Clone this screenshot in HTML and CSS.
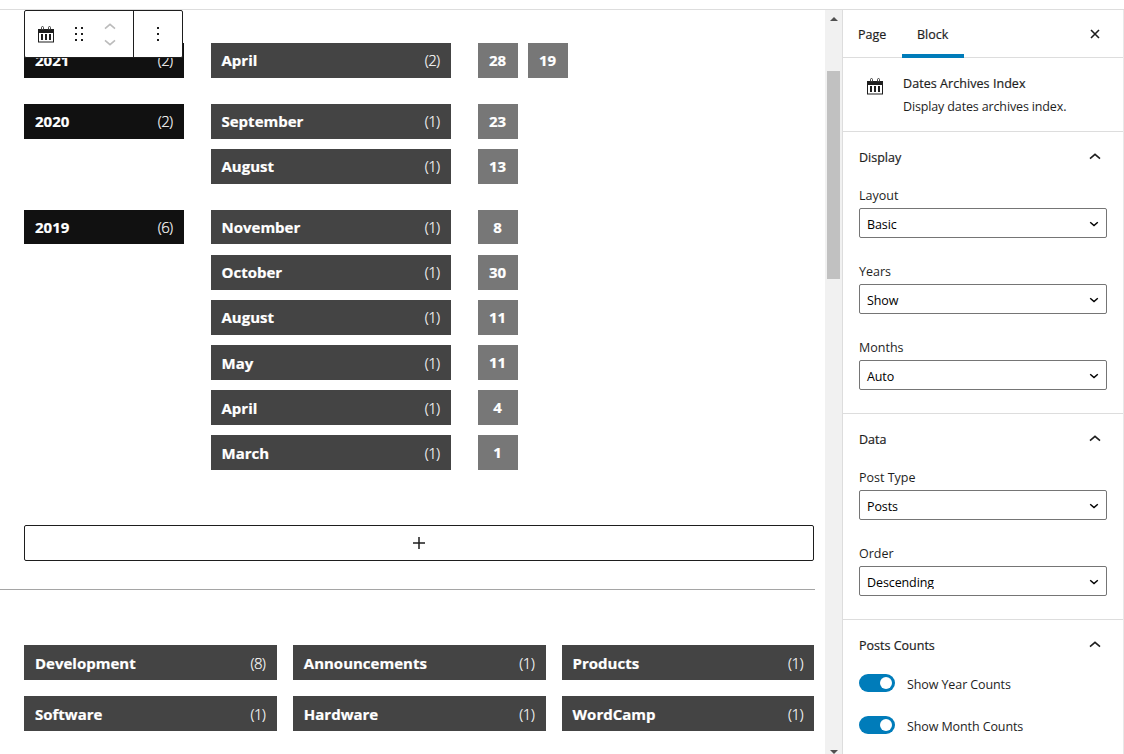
FILE: index.html
```html
<!DOCTYPE html>
<html lang="en">
<head>
<meta charset="utf-8">
<title>Block editor</title>
<link rel="stylesheet" href="styles.css">
</head>
<body>
<svg width="0" height="0" class="defs">
  <symbol id="cal" viewBox="0 0 16 17"><path d="M0 3h16v13.500H0zM1 7V15.500h14V7z" fill-rule="evenodd"/><path d="M3 8h2v6H3zM7 8h2v6H7zM11 8h2v6h-2z"/><path d="M3.500 3.500V1.500a1 1 0 0 1 2 0V3.500zM10.500 3.500V1.500a1 1 0 0 1 2 0V3.500z" fill="#fff" stroke="currentColor" stroke-width=".8"/></symbol>
  <symbol id="up" viewBox="0 0 12 7"><path d="M1 5.600 6 1.300l5 4.300" fill="none" stroke="currentColor" stroke-width="1.600"/></symbol>
  <symbol id="down" viewBox="0 0 10 6"><path d="M1.200 1.300l3.800 3.200 3.800-3.200" fill="none" stroke="currentColor" stroke-width="1.500"/></symbol>
</svg>
<div class="app">
  <main class="editor">
    <div class="toolbar">
      <div class="tools">
        <svg class="cal" width="16" height="17"><use href="#cal"/></svg>
        <svg class="drag" width="8" height="14"><path d="M0 0h2v2H0zM6 0h2v2H6zM0 6h2v2H0zM6 6h2v2H6zM0 12h2v2H0zM6 12h2v2H6z"/></svg>
        <span class="movers"><svg width="12" height="7"><use href="#up"/></svg><svg class="flip" width="12" height="7"><use href="#up"/></svg></span>
      </div>
      <div class="more"><svg width="2" height="14"><path d="M0 0h2v2H0zM0 6h2v2H0zM0 12h2v2H0z"/></svg></div>
    </div>
    <section class="archive">
      <div class="group">
        <div class="bar year"><b>2021</b><i>(2)</i></div>
        <div class="months">
          <div class="row"><div class="bar month"><b>April</b><i>(2)</i></div><span class="day">28</span><span class="day">19</span></div>
        </div>
      </div>
      <div class="group">
        <div class="bar year"><b>2020</b><i>(2)</i></div>
        <div class="months">
          <div class="row"><div class="bar month"><b>September</b><i>(1)</i></div><span class="day">23</span></div>
          <div class="row"><div class="bar month"><b>August</b><i>(1)</i></div><span class="day">13</span></div>
        </div>
      </div>
      <div class="group">
        <div class="bar year"><b>2019</b><i>(6)</i></div>
        <div class="months">
          <div class="row"><div class="bar month"><b>November</b><i>(1)</i></div><span class="day">8</span></div>
          <div class="row"><div class="bar month"><b>October</b><i>(1)</i></div><span class="day">30</span></div>
          <div class="row"><div class="bar month"><b>August</b><i>(1)</i></div><span class="day">11</span></div>
          <div class="row"><div class="bar month"><b>May</b><i>(1)</i></div><span class="day">11</span></div>
          <div class="row"><div class="bar month"><b>April</b><i>(1)</i></div><span class="day">4</span></div>
          <div class="row"><div class="bar month"><b>March</b><i>(1)</i></div><span class="day">1</span></div>
        </div>
      </div>
    </section>
    <div class="appender"><svg width="12" height="12"><path d="M6 0v12M0 6h12" stroke="#1e1e1e" stroke-width="1.500"/></svg></div>
    <div class="rule"></div>
    <section class="terms">
      <div class="bar"><b>Development</b><i>(8)</i></div>
      <div class="bar"><b>Announcements</b><i>(1)</i></div>
      <div class="bar"><b>Products</b><i>(1)</i></div>
      <div class="bar"><b>Software</b><i>(1)</i></div>
      <div class="bar"><b>Hardware</b><i>(1)</i></div>
      <div class="bar"><b>WordCamp</b><i>(1)</i></div>
    </section>
  </main>
  <div class="scrollbar">
    <svg width="8" height="4"><path d="M0 4l4-4 4 4z"/></svg>
    <div class="thumb"></div>
    <svg width="8" height="4"><path d="M0 0l4 4 4-4z"/></svg>
  </div>
  <aside class="sidebar">
    <div class="tabs">
      <span class="tab">Page</span><span class="tab active">Block</span>
      <svg class="close" width="10" height="10"><path d="M1 1l8 8M9 1L1 9" stroke="#1e1e1e" stroke-width="1.600"/></svg>
    </div>
    <div class="card">
      <svg width="16" height="17"><use href="#cal"/></svg>
      <div><h2>Dates Archives Index</h2><p>Display dates archives index.</p></div>
    </div>
    <section class="panel">
      <h3><span>Display</span><svg width="12" height="7"><use href="#up"/></svg></h3>
      <div class="field"><label>Layout</label><div class="select"><span>Basic</span><svg width="10" height="6"><use href="#down"/></svg></div></div>
      <div class="field"><label>Years</label><div class="select"><span>Show</span><svg width="10" height="6"><use href="#down"/></svg></div></div>
      <div class="field"><label>Months</label><div class="select"><span>Auto</span><svg width="10" height="6"><use href="#down"/></svg></div></div>
    </section>
    <section class="panel">
      <h3><span>Data</span><svg width="12" height="7"><use href="#up"/></svg></h3>
      <div class="field"><label>Post Type</label><div class="select"><span>Posts</span><svg width="10" height="6"><use href="#down"/></svg></div></div>
      <div class="field"><label>Order</label><div class="select"><span class="clipped">Descending</span><svg width="10" height="6"><use href="#down"/></svg></div></div>
    </section>
    <section class="panel last">
      <h3><span>Posts Counts</span><svg width="12" height="7"><use href="#up"/></svg></h3>
      <div class="toggle"><span class="switch"></span><span>Show Year Counts</span></div>
      <div class="toggle"><span class="switch"></span><span>Show Month Counts</span></div>
    </section>
  </aside>
</div>
</body>
</html>
```
FILE: styles.css
```css
* { box-sizing: border-box; }
body { margin: 0; padding-top: 9px; height: 754px; overflow: hidden; background: #fff; color: #1e1e1e; font: 12.5px/20px "Open Sans", "Noto Sans", sans-serif; }
svg { display: block; flex: none; fill: currentColor; }
.defs { position: absolute; }
.app { display: flex; height: 745px; border-top: 1px solid #ddd; }
.editor { position: relative; width: 825px; padding-top: 33px; flex: none; }
.toolbar { position: absolute; left: 24px; top: 0; width: 159px; height: 48px; display: flex; background: #fff; border: 1px solid #1e1e1e; border-radius: 2px; z-index: 1; }
.tools { width: 109px; display: flex; align-items: center; padding-left: 13px; border-right: 1px solid #1e1e1e; }
.drag { margin-left: 21px; }
.movers { display: grid; gap: 9px; margin-left: 21px; color: #bbb; }
.flip { transform: scaleY(-1); }
.more { flex: 1; display: flex; align-items: center; justify-content: center; }
.archive { display: grid; gap: 26.15px; padding-left: 24px; }
.group { display: flex; align-items: flex-start; gap: 27px; }
.months { display: grid; gap: 10.45px; }
.row { display: flex; gap: 10px; }
.bar { display: flex; align-items: center; justify-content: space-between; height: 34.7px; padding: 0 11.500px 0 11px; background: #444; color: #fff; font-size: 15px; }
.bar b { font-weight: 700; -webkit-text-stroke: .2px #fff; }
.month b { margin-left: -.5px; }
.bar i { font-style: normal; font-weight: 300; letter-spacing: -.65px; -webkit-text-stroke: .15px #fff; }
.year { width: 160px; background: #111; }
.month { width: 240px; margin-right: 17px; }
.day { width: 40px; height: 34.7px; background: #777; color: #fff; font: 700 15px/34.7px "Open Sans", sans-serif; text-align: center; padding-right: 1px; -webkit-text-stroke: .2px #fff; }
.appender { margin: 54.650px 11px 0 24px; height: 36px; border: 1px solid #1e1e1e; border-radius: 2px; display: flex; align-items: center; justify-content: center; }
.rule { margin: 28px 10px 0 0; height: 1px; background: #a5a5a5; }
.terms { display: grid; grid-template-columns: repeat(3, 1fr); gap: 16px; padding: 55.750px 10.600px 0 24px; }
.scrollbar { width: 17px; flex: none; background: #f1f1f1; color: #505050; display: flex; flex-direction: column; align-items: center; padding-top: 7px; }
.thumb { width: 13px; height: 208px; margin: 50px 0 471px; background: #c1c1c1; flex: none; }
.sidebar { width: 282px; border-left: 1px solid #ddd; border-right: 1px solid #e8e8e8; }
.tabs { height: 48px; display: flex; align-items: center; border-bottom: 1px solid #ddd; }
.tabs, h2, h3 { -webkit-text-stroke: .2px #1e1e1e; }
.tab { height: 48px; line-height: 50px; padding: 0 15px; }
.tab:first-child { width: 59px; }
.active { width: 62px; border-bottom: 4px solid #007cba; }
.close { margin-left: 126px; }
.card { height: 74px; display: flex; padding: 16px 16px 0 24px; border-bottom: 1px solid #ddd; }
.card svg { margin: 4px 20px 0 0; }
h2, h3, p { margin: 0; font-size: 12.5px; font-weight: 400; }
h2 { letter-spacing: .06px; }
.card p { margin-top: 3px; letter-spacing: -.14px; }
.panel { padding: 0 16px; border-bottom: 1px solid #ddd; height: 282px; }
.panel + .panel { height: 206px; }
.panel.last { border: 0; height: auto; }
h3 { height: 50px; padding: 0 6px 0 0; display: flex; align-items: center; justify-content: space-between; }
h3 span { padding-top: 2px; }
h3 svg { margin-top: -2px; }
.field { height: 76px; padding-top: 4px; }
label { display: block; height: 22px; line-height: 20px; }
.select { height: 30px; border: 1px solid #757575; border-radius: 2px; padding: 6px 7px 0; display: flex; justify-content: space-between; color: #000; }
.select span { height: 20px; line-height: 20px; letter-spacing: -.1px; }
.select .clipped { height: 16px; overflow: hidden; }
.select svg { margin-top: 6px; }
.toggle { height: 42px; display: flex; align-items: center; gap: 12px; padding-bottom: 16px; }
.toggle span:last-child { padding-top: 3px; letter-spacing: -.1px; }
.switch { width: 36px; height: 18px; border-radius: 9px; background: #007cba; padding: 3px 3px 3px 21px; }
.switch::after { content: ""; display: block; width: 12px; height: 12px; border-radius: 50%; background: #fff; }
```
